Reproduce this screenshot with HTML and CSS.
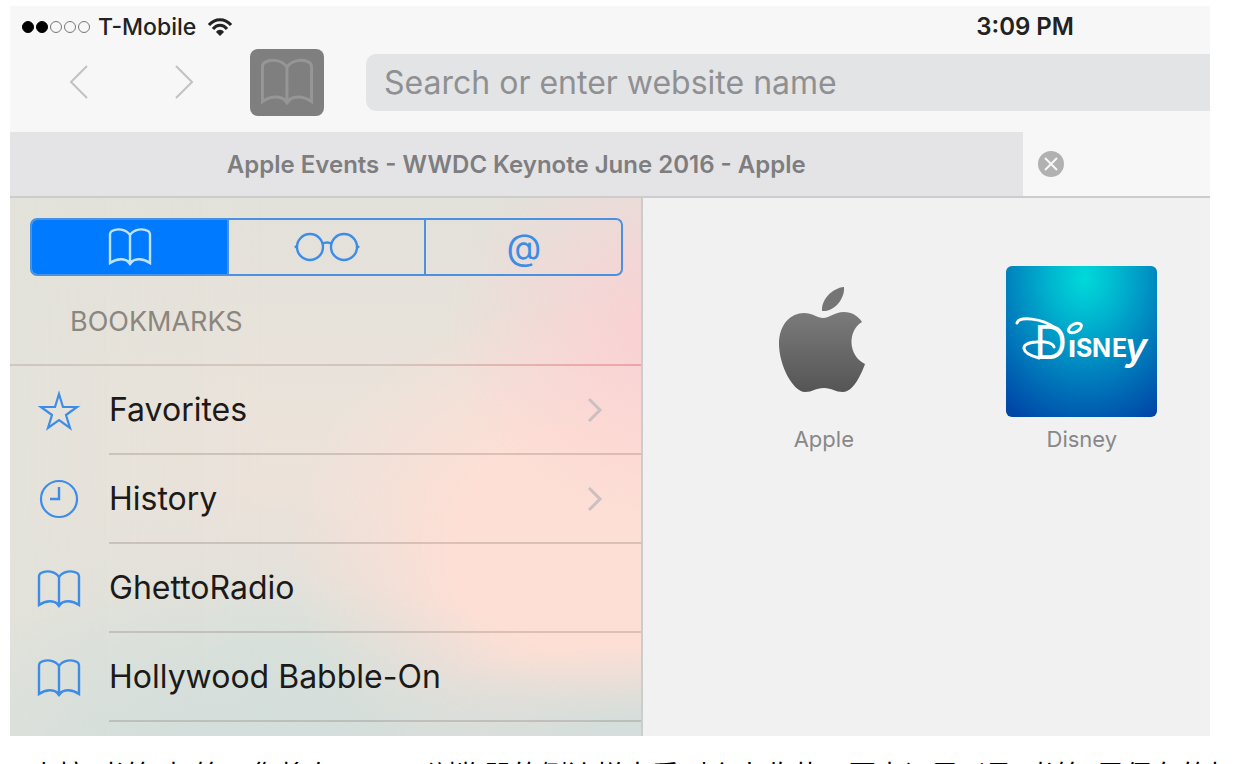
FILE: index.html
```html
<!DOCTYPE html>
<html lang="zh-CN">
<head>
    <meta charset="UTF-8">
    <meta name="viewport" content="width=device-width, initial-scale=1.0">
    <title>Safari Bookmarks</title>
    <link rel="stylesheet" href="styles.css">
</head>
<body>
    <!-- shared shapes -->
    <svg class="defs" aria-hidden="true">
        <symbol id="book" viewBox="0 0 44 38">
            <path d="M22 7C18 1 9 0 4 3C2 4 2 5 2 7V35C9 30 17 30 22 35C27 30 35 30 42 35V7C42 5 42 4 40 3C35 0 26 1 22 7ZM22 6V36" fill="none" stroke="currentColor" stroke-width="2.4"/>
            <path d="M18 33L22 38L26 33Z" fill="currentColor"/>
        </symbol>
        <symbol id="chevron" viewBox="0 0 16 26">
            <path d="M2 2L13 13L2 24" fill="none" stroke="currentColor" stroke-width="3"/>
        </symbol>
    </svg>

    <div class="browser" lang="en">
        <div class="status-bar">
            <div class="signal">
                <span class="dot full"></span>
                <span class="dot full"></span>
                <span class="dot"></span>
                <span class="dot"></span>
                <span class="dot"></span>
            </div>
            <span class="carrier">T-Mobile</span>
            <svg class="wifi" viewBox="0 0 24 18" aria-hidden="true">
                <g fill="none" stroke="currentColor" stroke-width="3">
                    <path d="M1 7C7 0 17 0 23 7"/>
                    <path d="M5 11C9 6 15 6 19 11"/>
                </g>
                <path d="M8 14C10 11 14 11 16 14L12 18Z" fill="currentColor"/>
            </svg>
            <span class="time">3:09 PM</span>
        </div>

        <div class="toolbar">
            <button class="nav-btn" aria-label="Back">
                <svg viewBox="0 0 20 36"><path d="M18 2L2 18L18 34" fill="none" stroke="currentColor" stroke-width="2"/></svg>
            </button>
            <button class="nav-btn" aria-label="Forward">
                <svg viewBox="0 0 20 36"><path d="M2 2L18 18L2 34" fill="none" stroke="currentColor" stroke-width="2"/></svg>
            </button>
            <button class="book-btn" aria-label="Bookmarks">
                <svg><use href="#book"/></svg>
            </button>
            <input class="search" type="text" aria-label="Address" placeholder="Search or enter website name">
        </div>

        <div class="tabs">
            <button class="tab">Apple Events - WWDC Keynote June 2016 - Apple</button>
            <div class="tab-active">
                <button class="close-btn" aria-label="Close tab">
                    <svg viewBox="0 0 26 26"><circle cx="13" cy="13" r="13" fill="#b1b1b1"/><path d="M7 7L19 19M19 7L7 19" stroke="#f7f7f7" stroke-width="2"/></svg>
                </button>
            </div>
        </div>

        <div class="content">
            <div class="sidebar">
                <div class="segments">
                    <button class="segment selected" aria-label="Bookmarks">
                        <svg class="icon-book"><use href="#book"/></svg>
                    </button>
                    <button class="segment" aria-label="Reading list">
                        <svg class="icon-glasses" viewBox="0 0 66 30">
                            <g fill="none" stroke="currentColor" stroke-width="2.4">
                                <circle cx="16" cy="15" r="13"/>
                                <circle cx="50" cy="15" r="13"/>
                                <path d="M28 12Q33 9 38 12"/>
                            </g>
                            <path d="M4 11L0 15L4 18ZM62 11L66 15L62 18Z" fill="currentColor"/>
                        </svg>
                    </button>
                    <button class="segment" aria-label="Shared links">@</button>
                </div>
                <h2 class="heading">BOOKMARKS</h2>
                <ul class="list">
                    <li>
                        <svg class="icon" viewBox="0 0 44 38"><path d="M22 2L26 15H40L29 23L33 36L22 28L11 36L15 23L4 15H18Z" fill="none" stroke="currentColor" stroke-width="2.2"/></svg>
                        <a class="item" href="#favorites">Favorites <svg class="arrow"><use href="#chevron"/></svg></a>
                    </li>
                    <li>
                        <svg class="icon" viewBox="0 0 44 38"><circle cx="22" cy="18" r="18" fill="none" stroke="currentColor" stroke-width="2.2"/><path d="M22 6V18H13" fill="none" stroke="currentColor" stroke-width="2.4"/></svg>
                        <a class="item" href="#history">History <svg class="arrow"><use href="#chevron"/></svg></a>
                    </li>
                    <li>
                        <svg class="icon"><use href="#book"/></svg>
                        <a class="item" href="#ghettoradio">GhettoRadio</a>
                    </li>
                    <li>
                        <svg class="icon"><use href="#book"/></svg>
                        <a class="item" href="#babble-on">Hollywood Babble-On</a>
                    </li>
                </ul>
            </div>

            <div class="sites">
                <a class="site" href="#apple">
                    <svg class="tile" viewBox="0 0 151 151" aria-hidden="true">
                        <defs>
                            <linearGradient id="grey" x1="0" y1="0" x2="0" y2="1">
                                <stop offset="0" stop-color="#7b7b7b"/>
                                <stop offset="1" stop-color="#555"/>
                            </linearGradient>
                        </defs>
                        <path d="M96 21C97 32 87 46 74 45C73 34 84 22 96 21Z" fill="#757575"/>
                        <path d="M75 52C82 52 86 46 96 46C104 46 110 50 114 56C99 65 100 90 117 98C113 109 105 126 95 126C87 126 84 122 76 122C67 122 65 126 57 126C45 126 31 99 31 78C31 58 43 47 56 47C64 47 70 52 75 52Z" fill="url(#grey)"/>
                    </svg>
                    <span>Apple</span>
                </a>
                <a class="site" href="#disney">
                    <svg class="tile disney" viewBox="0 0 151 151" aria-hidden="true">
                        <g fill="none" stroke="#fff" stroke-linecap="round">
                            <path d="M11 57C13 50 36 52 49 62" stroke-width="3"/>
                            <path d="M33 92C14 87 13 77 30 76C40 75 47 77 48 81" stroke-width="3"/>
                            <ellipse cx="69" cy="62" rx="7" ry="4" transform="rotate(-28 69 62)" stroke-width="3"/>
                        </g>
                        <g class="wordmark">
                            <text x="28" y="93" font-size="46" font-weight="400">D</text>
                            <text x="62" y="91" font-size="30">ı</text>
                            <text x="70" y="91" font-size="25">S</text>
                            <text x="86" y="91" font-size="25">N</text>
                            <text x="106" y="91" font-size="25">E</text>
                            <text x="119" y="94" font-size="38" font-style="italic" font-weight="600">y</text>
                        </g>
                    </svg>
                    <span>Disney</span>
                </a>
            </div>
        </div>
    </div>

    <p class="article">点按“书签”标签，您将在 Safari 浏览器的侧边栏中看到个人收藏、历史记录以及“书签”里保存的标签</p>
</body>
</html>
```
FILE: styles.css
```css
* {
    box-sizing: border-box;
}
body {
    margin: 0;
    padding: 6px 28px 0 10px;
    height: 100vh;
    overflow: hidden;
    background: #fff;
    font-family: Inter, "Noto Sans CJK SC", sans-serif;
}
button {
    border: none;
    padding: 0;
    background: none;
    font-family: inherit;
    cursor: pointer;
}
svg {
    display: block;
}
.defs {
    display: none;
}
.browser {
    background: #f7f7f7;
}

/* status bar */
.status-bar {
    display: flex;
    align-items: center;
    height: 41px;
    padding: 0 136px 0 12px;
    color: #222;
    font-size: 24px;
}
.signal {
    display: flex;
    gap: 2px;
}
.dot {
    width: 12px;
    height: 12px;
    border: 1px solid #777;
    border-radius: 50%;
}
.dot.full {
    background: #000;
    border-color: #000;
}
.carrier {
    margin-left: 8px;
    font-size: 23px;
    font-weight: 500;
}
.wifi {
    width: 24px;
    height: 18px;
    margin-left: 12px;
}
.time {
    margin-left: auto;
    font-weight: 600;
}

/* toolbar */
.toolbar {
    display: flex;
    align-items: center;
    height: 85px;
    padding: 0 0 15px 16px;
}
.nav-btn {
    display: flex;
    justify-content: center;
    width: 105px;
    color: #c2c2c2;
}
.nav-btn svg {
    width: 20px;
    height: 36px;
}
.book-btn {
    display: flex;
    align-items: center;
    justify-content: center;
    width: 74px;
    height: 67px;
    margin: 0 42px 0 14px;
    border-radius: 8px;
    background: #7f7f7f;
    color: #969696;
}
.book-btn svg {
    width: 54px;
    height: 48px;
}
.search {
    flex: 1;
    min-width: 0;
    height: 57px;
    padding: 0 18px;
    border: none;
    border-radius: 10px 0 0 10px;
    background: #e3e4e6;
    font-family: inherit;
    font-size: 32px;
}
.search::placeholder {
    color: #909092;
}

/* tabs */
.tabs {
    display: grid;
    grid-template-columns: 27fr 5fr;
    height: 66px;
    border-bottom: 2px solid #ccc;
}
.tab {
    background: #e4e4e6;
    color: #7e7e80;
    font-size: 24px;
    font-weight: 600;
}
.tab-active {
    display: flex;
    align-items: center;
    padding-left: 15px;
}
.close-btn svg {
    width: 26px;
    height: 26px;
}

.content {
    display: grid;
    grid-template-columns: 19fr 17fr;
}

/* bookmarks panel */
.sidebar {
    padding-bottom: 14px;
    border-right: 2px solid #ccc;
    background:
        radial-gradient(ellipse 45% 20% at 100% 103%, #d5dedb 30%, transparent),
        radial-gradient(ellipse 65% 35% at 35% 105%, #d2dedb, transparent),
        radial-gradient(ellipse 35% 36% at 104% 24%, #fbd0d3, transparent),
        radial-gradient(ellipse 52% 48% at 96% 66%, #fddfd5 50%, transparent),
        linear-gradient(to right, #e3e2da, transparent 40%),
        linear-gradient(#e2e1da, #ebe3da 40%, #ece2da 55%, #dbe1da 85%, #dadeda);
}
.segments {
    display: flex;
    height: 58px;
    margin: 20px 18px 0 20px;
    border: 2px solid #4b91e2;
    border-radius: 7px;
    overflow: hidden;
}
.segment {
    display: flex;
    flex: 1;
    align-items: center;
    justify-content: center;
    color: #3d8de8;
    font-size: 36px;
    line-height: 40px;
}
.segment + .segment {
    border-left: 2px solid #4b91e2;
}
.segment.selected {
    background: #007aff;
    color: #bfe2ff;
}
.icon-book {
    width: 44px;
    height: 38px;
}
.icon-glasses {
    width: 66px;
    height: 30px;
}
.heading {
    margin: 0;
    padding: 30px 0 26px 60px;
    border-bottom: 2px solid;
    border-image: linear-gradient(to right, #cfc8c0, #d5c5bc 60%, #f2a2a8) 1;
    color: #8b8680;
    font-size: 27px;
    font-weight: 400;
    line-height: 32px;
}
.list {
    margin: 0;
    padding: 0;
    list-style: none;
}
.list li {
    display: flex;
    align-items: center;
    padding-left: 27px;
    color: #3d8de8;
}
.icon {
    width: 44px;
    height: 38px;
    overflow: visible;
}
.item {
    display: flex;
    flex: 1;
    align-items: center;
    justify-content: space-between;
    height: 89px;
    margin-left: 28px;
    padding-right: 38px;
    border-bottom: 2px solid rgba(120, 100, 90, 0.25);
    color: #1c1a19;
    font-size: 32px;
    text-decoration: none;
}
.arrow {
    width: 16px;
    height: 26px;
    color: #cbbfc0;
}

/* favorites grid */
.sites {
    display: flex;
    align-items: flex-start;
    gap: 107px;
    padding: 68px 0 0 105px;
    background: #f1f1f1;
}
.site {
    display: flex;
    flex-direction: column;
    align-items: center;
    gap: 8px;
    color: #888;
    font-size: 22px;
    line-height: 28px;
    text-decoration: none;
}
.tile {
    width: 151px;
    height: 151px;
}
.disney {
    border-radius: 6px;
    background: radial-gradient(ellipse 85% 105% at 52% 8%, #00dada, #00b8d0 25%, #007fbd 62%, #0048a8);
}
.wordmark {
    fill: #fff;
    font-weight: 700;
}

/* article text under the screen */
.article {
    margin: 18px -28px 0 0;
    padding-left: 20px;
    font-size: 28px;
    line-height: 44px;
    white-space: nowrap;
}
```
